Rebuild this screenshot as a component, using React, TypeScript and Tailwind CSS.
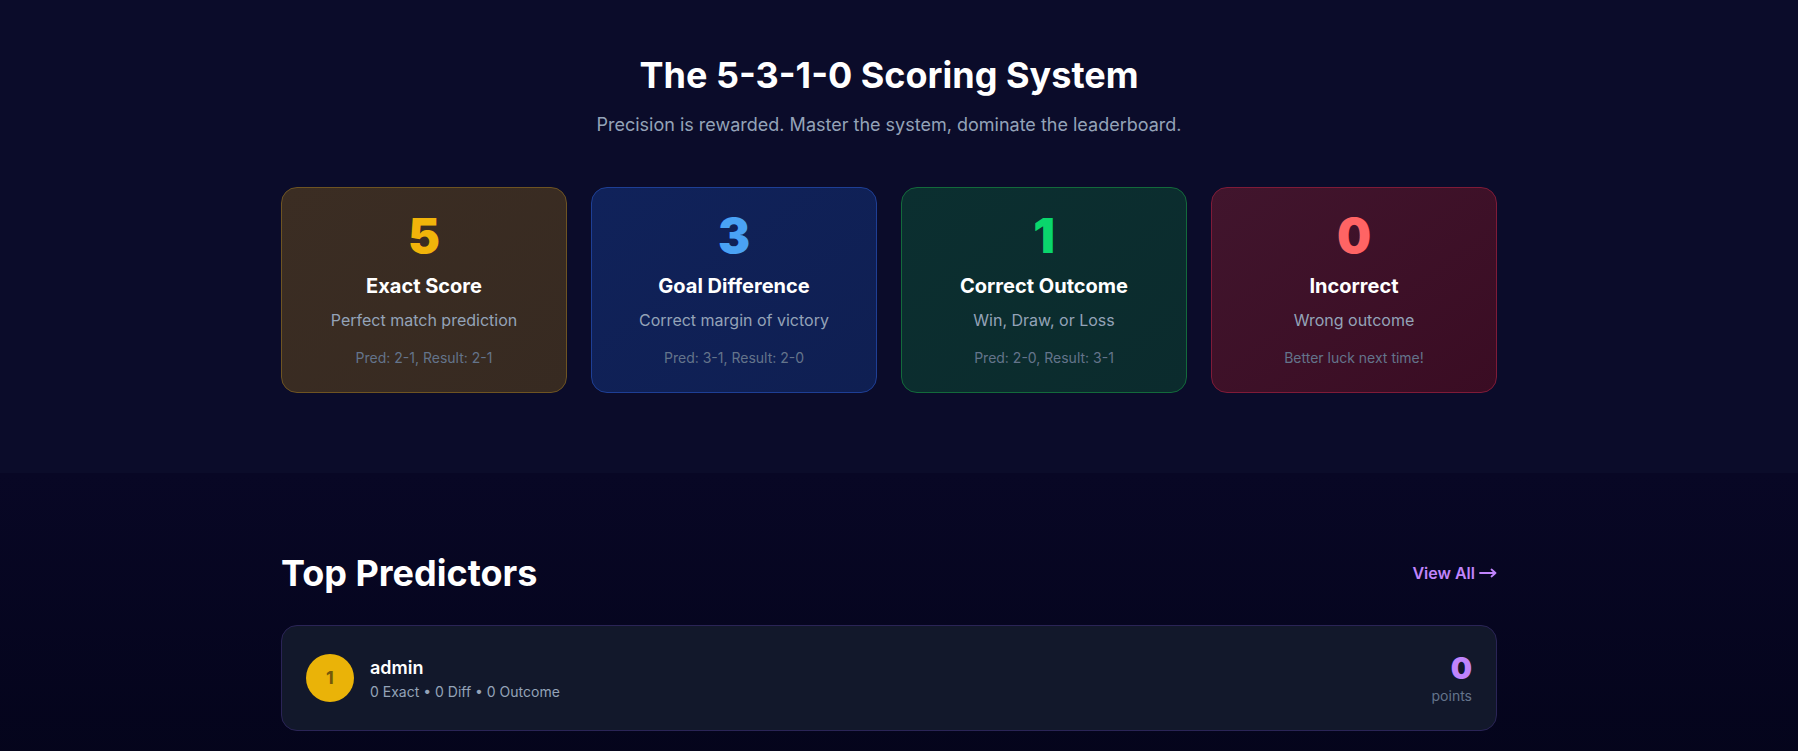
import React from "react";

const cards = [
  {
    n: "5",
    title: "Exact Score",
    desc: "Perfect match prediction",
    ex: "Pred: 2-1, Result: 2-1",
    box: "bg-gradient-to-br from-[#3b2d23] to-[#372a21] border-[#6e5422]",
    num: "text-[#f1b40a]",
  },
  {
    n: "3",
    title: "Goal Difference",
    desc: "Correct margin of victory",
    ex: "Pred: 3-1, Result: 2-0",
    box: "bg-gradient-to-br from-[#10225a] to-[#0f1f52] border-[#1e3f95]",
    num: "text-[#4aa2f4]",
  },
  {
    n: "1",
    title: "Correct Outcome",
    desc: "Win, Draw, or Loss",
    ex: "Pred: 2-0, Result: 3-1",
    box: "bg-gradient-to-br from-[#0b2f30] to-[#0b2b2d] border-[#136a3b]",
    num: "text-[#0ad66c]",
  },
  {
    n: "0",
    title: "Incorrect",
    desc: "Wrong outcome",
    ex: "Better luck next time!",
    box: "bg-gradient-to-br from-[#41152d] to-[#3a0c23] border-[#7f1b38]",
    num: "text-[#ff6464]",
  },
];

export default function App() {
  return (
    <div
      className="min-h-[751px] w-full bg-[#06051c]"
      style={{ fontFamily: "Inter, 'Noto Sans', sans-serif" }}
    >
      <section className="bg-[#0b0c2a] pt-[55px] pb-20 pr-[20px]">
        <div className="mx-auto max-w-7xl px-8">
          <h2 className="text-center text-4xl font-bold text-white">
            The 5-3-1-0 Scoring System
          </h2>
          <p className="mt-4 text-center text-lg text-[#94a3b8]">
            Precision is rewarded. Master the system, dominate the leaderboard.
          </p>
          <div className="mt-12 grid grid-cols-4 gap-6">
            {cards.map((c) => (
              <div
                key={c.n}
                className={`rounded-2xl border p-6 text-center ${c.box}`}
              >
                <div className={`text-5xl leading-none font-black ${c.num}`}>
                  {c.n}
                </div>
                <div className="mt-3 text-xl font-bold text-white">
                  {c.title}
                </div>
                <div className="mt-2 text-base text-[#94a3b8]">{c.desc}</div>
                <div className="mt-4 text-sm text-[#64748b]">{c.ex}</div>
              </div>
            ))}
          </div>
        </div>
      </section>
      <section className="bg-gradient-to-b from-[#080725] to-[#04041a] pt-20 pb-20 pr-[20px]">
        <div className="mx-auto max-w-7xl px-8">
          <div className="mb-8 flex items-center justify-between">
            <h2 className="text-4xl font-bold text-white">Top Predictors</h2>
            <a className="flex items-center gap-1 text-base font-semibold text-[#c084fc]">
              View All
              <svg
                width="18"
                height="10"
                viewBox="0 0 18 10"
                fill="none"
                stroke="currentColor"
                strokeWidth="1.8"
                strokeLinecap="round"
                strokeLinejoin="round"
              >
                <path d="M1 5h15.5M12.5 1.5L16.5 5l-4 3.5" />
              </svg>
            </a>
          </div>
          <div className="flex items-center justify-between rounded-2xl border border-[#2a2456] bg-[#12182b] p-6">
            <div className="flex items-center gap-4">
              <div className="flex h-12 w-12 items-center justify-center rounded-full bg-[#eab308] text-lg font-bold text-[#74590a]">
                1
              </div>
              <div>
                <div className="text-lg font-semibold text-white">admin</div>
                <div className="text-sm text-[#94a3b8]">
                  0 Exact • 0 Diff • 0 Outcome
                </div>
              </div>
            </div>
            <div className="text-right">
              <div className="text-3xl font-black text-[#c084fc]">0</div>
              <div className="text-sm text-[#64748b]">points</div>
            </div>
          </div>
        </div>
      </section>
    </div>
  );
}
